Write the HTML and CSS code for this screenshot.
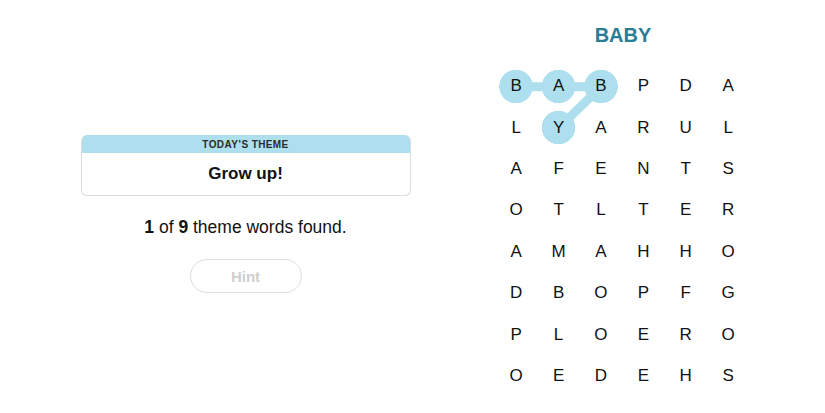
FILE: index.html
```html
<!DOCTYPE html>
<html>
<head>
<meta charset="utf-8">
<link rel="stylesheet" href="styles.css">
</head>
<body>
<main class="page">
  <section class="left">
    <div class="theme">
      <div class="theme-head">TODAY’S THEME</div>
      <div class="theme-body">Grow up!</div>
    </div>
    <p class="progress"><b>1</b> of <b>9</b> theme words found.</p>
    <button class="hint">Hint</button>
  </section>
  <section class="right">
    <h1 class="word">BABY</h1>
    <div class="board">
      <svg class="links" width="254" height="331" viewBox="0 0 254 331">
        <polyline points="21.2,20.7 63.6,20.7 106,20.7 63.6,62.1" fill="none" stroke="#aedfee" stroke-width="9" stroke-linejoin="round" stroke-linecap="round"/>
      </svg>
      <div class="grid">
        <span class="cell on">B</span><span class="cell on">A</span><span class="cell on">B</span><span class="cell">P</span><span class="cell">D</span><span class="cell">A</span>
        <span class="cell">L</span><span class="cell on">Y</span><span class="cell">A</span><span class="cell">R</span><span class="cell">U</span><span class="cell">L</span>
        <span class="cell">A</span><span class="cell">F</span><span class="cell">E</span><span class="cell">N</span><span class="cell">T</span><span class="cell">S</span>
        <span class="cell">O</span><span class="cell">T</span><span class="cell">L</span><span class="cell">T</span><span class="cell">E</span><span class="cell">R</span>
        <span class="cell">A</span><span class="cell">M</span><span class="cell">A</span><span class="cell">H</span><span class="cell">H</span><span class="cell">O</span>
        <span class="cell">D</span><span class="cell">B</span><span class="cell">O</span><span class="cell">P</span><span class="cell">F</span><span class="cell">G</span>
        <span class="cell">P</span><span class="cell">L</span><span class="cell">O</span><span class="cell">E</span><span class="cell">R</span><span class="cell">O</span>
        <span class="cell">O</span><span class="cell">E</span><span class="cell">D</span><span class="cell">E</span><span class="cell">H</span><span class="cell">S</span>
      </div>
    </div>
  </section>
</main>
</body>
</html>
```
FILE: styles.css
```css
html, body {
  margin: 0;
  padding: 0;
  background: #fff;
}
body {
  width: 825px;
  height: 413px;
  overflow: hidden;
  font-family: "Liberation Sans", Arial, sans-serif;
  color: #121212;
}
.page {
  display: flex;
}
.left {
  flex: none;
  width: 491px;
  padding-top: 135px;
  display: flex;
  flex-direction: column;
  align-items: center;
}
.theme {
  width: 328px;
  border: 1px solid #dcdcdc;
  border-top: none;
  border-radius: 6px;
  overflow: hidden;
}
.theme-head {
  background: #aedfee;
  height: 18px;
  line-height: 19px;
  text-align: center;
  font-size: 10px;
  font-weight: bold;
  letter-spacing: 0.4px;
  color: #2b2b2b;
}
.theme-body {
  height: 42px;
  line-height: 42px;
  text-align: center;
  font-size: 17px;
  font-weight: bold;
}
.progress {
  margin: 20px 0 0;
  font-size: 17.5px;
  line-height: 22px;
}
.hint {
  margin-top: 21px;
  width: 112px;
  height: 34px;
  border: 1.5px solid #dedede;
  border-radius: 17px;
  background: #fff;
  font-family: "Liberation Sans", Arial, sans-serif;
  font-size: 15px;
  font-weight: bold;
  color: #cfcfcf;
}
.right {
  flex: none;
  width: 262px;
  display: flex;
  flex-direction: column;
  align-items: center;
}
.word {
  margin: 23px 0 0;
  height: 24px;
  line-height: 24px;
  font-size: 20px;
  font-weight: bold;
  color: #2a7d96;
  transform: translateX(1px);
}
.board {
  position: relative;
  margin-top: 18.5px;
  width: 254px;
  height: 331px;
}
.links {
  position: absolute;
  left: 0;
  top: 0;
}
.grid {
  position: relative;
  display: grid;
  grid-template-columns: repeat(6, 42.4px);
  grid-auto-rows: 41.4px;
}
.cell {
  display: flex;
  align-items: center;
  justify-content: center;
  font-size: 17px;
  color: #121212;
}
.cell.on {
  background: radial-gradient(circle, #aedfee 16.5px, transparent 17px);
}
```
